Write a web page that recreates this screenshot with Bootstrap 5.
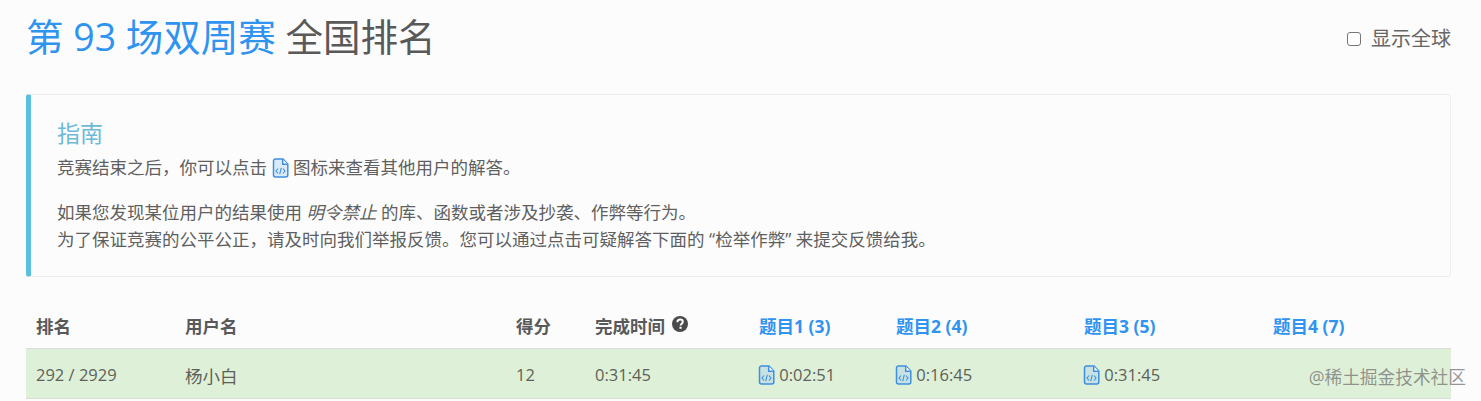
<!DOCTYPE html>
<html lang="en">
<head>
  <meta charset="UTF-8" />
  <meta name="viewport" content="width=device-width, initial-scale=1.0"/>
  <title>第 93 场双周赛 全国排名</title>
  <link href="https://cdn.jsdelivr.net/npm/bootstrap@5.3.3/dist/css/bootstrap.min.css" rel="stylesheet">
  <style>
    html, body { height: 401px; overflow: hidden; }
    body {
      background: #fcfcfd;
      color: #5f5f5f;
      font-family: "Open Sans", "Noto Sans CJK SC", sans-serif;
      font-size: 17.5px;
      line-height: 27px;
    }
    .page-wrap { padding: 0 30px 0 26px; }
    .page-head { height: 94px; padding-top: 10px; }
    .page-title { font-size: 37.5px; line-height: 54px; font-weight: 400; margin: 0; color: #595959; }
    .page-title span { color: #2f93f0; }
    .world-check { font-size: 20px; color: #666; margin-top: 15px; }
    .world-check input {
      width: 14px; height: 14px; border: 1px solid #767676; border-radius: 3px;
      margin: 0 10px 0 -1px; background: #fff; appearance: none;
    }
    .guide {
      height: 183px;
      padding: 23px 20px 0 26px;
      border: 1px solid #eeeeee;
      border-left: 5px solid #5bc0de;
      border-radius: 3px;
      margin-bottom: 32px;
    }
    .guide h4 { font-size: 23px; line-height: 30px; color: #6cb9d8; font-weight: 400; margin: 0 0 6px; }
    .guide p { margin: 0 0 18px; }
    .guide em { font-style: italic; }
    .code-ico { width: 17px; height: 20px; vertical-align: -4px; }
    .rank-table { table-layout: fixed; width: 100%; margin: 0; --bs-table-bg: transparent; color: #595959; }
    .rank-table th, .rank-table td { padding: 0 10px; vertical-align: middle; box-shadow: none; }
    .rank-table th { height: 39px; padding-bottom: 3px; font-weight: 700; color: #595959; border-bottom: 1px solid #dcdcdc; }
    .rank-table td { height: 50px; padding-top: 2px; background: #dff0d8; border-bottom: 1px solid #d8dcd6; color: #5c6258; font-size: 16.5px; }
    .rank-table td.user-cell { padding-top: 7px; font-size: 17.5px; }
    .rank-table th a { color: #2f93f0; text-decoration: none; }
    .rank-table .code-ico { margin: 0 0 0 -1px; }
    .col-rank { width: 149px; } .col-user { width: 331px; } .col-score { width: 79px; }
    .col-time { width: 164px; } .col-q1 { width: 137px; } .col-q2 { width: 188px; }
    .col-q3 { width: 189px; } .col-q4 { width: 188px; }
    .help-ico { width: 16px; height: 16px; vertical-align: 1px; margin-left: 2px; }
    .juejin-mark { position: absolute; right: 15px; top: 365px; font-size: 17.7px; line-height: 24px; color: rgba(110,110,110,.72); }
  </style>
</head>
<body>
  <svg class="d-none">
    <symbol id="codeFile" viewBox="0 0 17 20">
      <path d="M1.500 3a2 2 0 0 1 2-2H11l4.800 5v11a2 2 0 0 1-2 2H3.500a2 2 0 0 1-2-2z" fill="#9cc8f2" fill-opacity=".35" stroke="#3f8fe0" stroke-width="1.500"/>
      <path d="M10.700 1.200V6.300H15.800" fill="#fff" stroke="#3f8fe0" stroke-width="1.500"/>
      <path d="M6 10.500 4 13l2 2.500M11 10.500l2 2.500-2 2.500M9.300 9.800l-1.600 6.400" fill="none" stroke="#3f8fe0" stroke-width="1.100"/>
    </symbol>
  </svg>

  <div class="page-wrap">
    <div class="page-head d-flex justify-content-between align-items-start">
      <h1 class="page-title"><span>第 93 场双周赛</span> 全国排名</h1>
      <label class="world-check d-flex align-items-center"><input type="checkbox">显示全球</label>
    </div>

    <div class="guide">
      <h4>指南</h4>
      <p>竞赛结束之后，你可以点击 <svg class="code-ico"><use href="#codeFile"/></svg> 图标来查看其他用户的解答。</p>
      <p class="mb-0">如果您发现某位用户的结果使用 <em>明令禁止</em> 的库、函数或者涉及抄袭、作弊等行为。<br>为了保证竞赛的公平公正，请及时向我们举报反馈。您可以通过点击可疑解答下面的 “检举作弊” 来提交反馈给我。</p>
    </div>

    <table class="table rank-table">
      <colgroup>
        <col class="col-rank"><col class="col-user"><col class="col-score"><col class="col-time">
        <col class="col-q1"><col class="col-q2"><col class="col-q3"><col class="col-q4">
      </colgroup>
      <thead>
        <tr>
          <th>排名</th>
          <th>用户名</th>
          <th>得分</th>
          <th>完成时间 <svg class="help-ico" viewBox="0 0 16 16"><circle cx="8" cy="8" r="8" fill="#4a4a4a"/><path d="M5.300 6.200C5.400 4.500 6.600 3.500 8.100 3.500c1.600 0 2.700 1 2.700 2.300 0 1.900-2.200 1.900-2.200 3.600" fill="none" stroke="#fff" stroke-width="1.900"/><rect x="7.500" y="10.700" width="2.100" height="2.100" fill="#fff"/></svg></th>
          <th><a href="#">题目1 (3)</a></th>
          <th><a href="#">题目2 (4)</a></th>
          <th><a href="#">题目3 (5)</a></th>
          <th><a href="#">题目4 (7)</a></th>
        </tr>
      </thead>
      <tbody>
        <tr>
          <td>292 / 2929</td>
          <td class="user-cell">杨小白</td>
          <td>12</td>
          <td>0:31:45</td>
          <td><svg class="code-ico"><use href="#codeFile"/></svg> 0:02:51</td>
          <td><svg class="code-ico"><use href="#codeFile"/></svg> 0:16:45</td>
          <td><svg class="code-ico"><use href="#codeFile"/></svg> 0:31:45</td>
          <td></td>
        </tr>
      </tbody>
    </table>
  </div>

  <div class="juejin-mark">@稀土掘金技术社区</div>

  <script src="https://cdn.jsdelivr.net/npm/bootstrap@5.3.3/dist/js/bootstrap.bundle.min.js"></script>
</body>
</html>
